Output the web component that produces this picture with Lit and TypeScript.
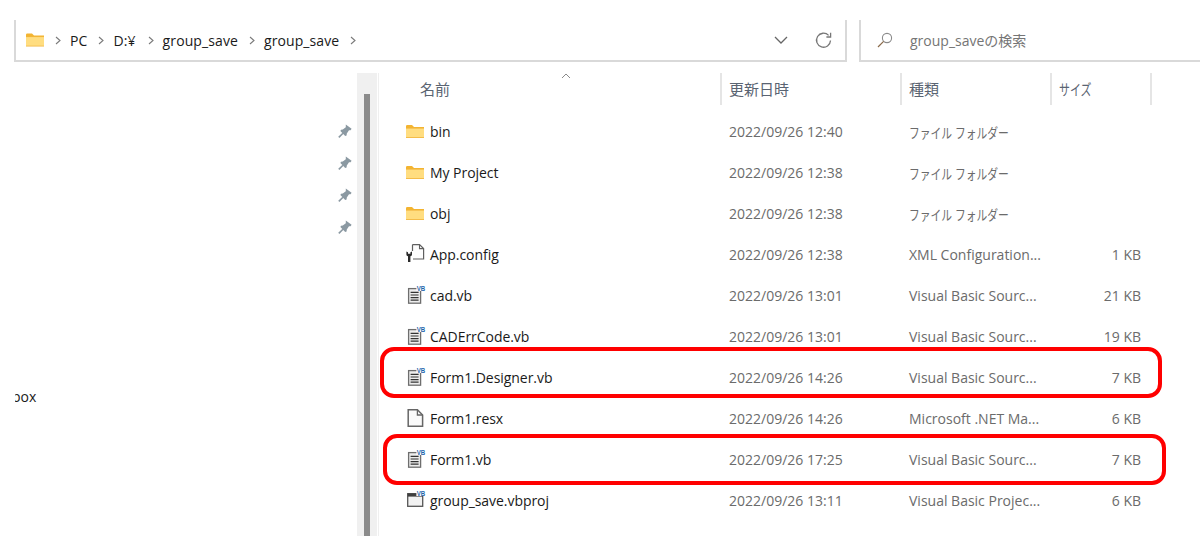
import { LitElement, html, css, svg } from "lit";
import { customElement } from "lit/decorators.js";

type Kind = "folder" | "config" | "vb" | "resx" | "proj";
interface Row { name: string; date: string; type: string; size: string; icon: Kind; kana?: boolean; }

const rows: Row[] = [
  { name: "bin", date: "2022/09/26 12:40", type: "ファイル フォルダー", size: "", icon: "folder", kana: true },
  { name: "My Project", date: "2022/09/26 12:38", type: "ファイル フォルダー", size: "", icon: "folder", kana: true },
  { name: "obj", date: "2022/09/26 12:38", type: "ファイル フォルダー", size: "", icon: "folder", kana: true },
  { name: "App.config", date: "2022/09/26 12:38", type: "XML Configuration...", size: "1 KB", icon: "config" },
  { name: "cad.vb", date: "2022/09/26 13:01", type: "Visual Basic Sourc...", size: "21 KB", icon: "vb" },
  { name: "CADErrCode.vb", date: "2022/09/26 13:01", type: "Visual Basic Sourc...", size: "19 KB", icon: "vb" },
  { name: "Form1.Designer.vb", date: "2022/09/26 14:26", type: "Visual Basic Sourc...", size: "7 KB", icon: "vb" },
  { name: "Form1.resx", date: "2022/09/26 14:26", type: "Microsoft .NET Ma...", size: "6 KB", icon: "resx" },
  { name: "Form1.vb", date: "2022/09/26 17:25", type: "Visual Basic Sourc...", size: "7 KB", icon: "vb" },
  { name: "group_save.vbproj", date: "2022/09/26 13:11", type: "Visual Basic Projec...", size: "6 KB", icon: "proj" },
];

const folderShape = svg`
  <path d="M0 1.2Q0 0 1.2 0H6L8 2H18V5H0Z" fill="#f3b431"/>
  <rect x="0" y="3" width="18" height="10" fill="#f2b53c"/>
  <rect x="0" y="3.6" width="18" height="8.6" fill="#ffdd80"/>`;

const addrFolder = html`<svg width="18" height="14" viewBox="0 0 18 13">${folderShape}</svg>`;

const badge = svg`<text x="10.8" y="5.6" font-family="Liberation Sans" font-size="6.8" font-weight="700" fill="#1f66ab" textLength="8.4" lengthAdjust="spacingAndGlyphs">VB</text>`;

const box = (inner: unknown) => html`<svg width="20" height="22" viewBox="0 0 20 22">${inner}</svg>`;

const icons: Record<Kind, unknown> = {
  folder: box(svg`<g transform="translate(0 4)">${folderShape}</g>`),
  config: box(svg`
    <path d="M6.5 0.6H13.5L17.6 4.6V15H7" fill="#fdfdfd" stroke="#5f5f5f" stroke-width="1.2"/>
    <path d="M13.5 0.6V4.6H17.6" fill="none" stroke="#5f5f5f" stroke-width="1.1"/>
    <path d="M6.5 0.6V7" stroke="#5f5f5f" stroke-width="1.2"/>
    <path d="M0.4 7.5V10.4Q0.4 11.8 2 12.2V18H4.4V12.2Q6 11.8 6 10.4V7.5L4.4 8.3V9.8H2V8.3Z" fill="#2b2b2b"/>`),
  vb: box(svg`
    <rect x="2.6" y="3.6" width="12" height="14.6" fill="#ededed" stroke="#6e6e6e" stroke-width="1.3"/>
    <path d="M4.6 7.4H12.6M4.6 10H12.6M4.6 12.6H12.6M4.6 15.2H12.6" stroke="#333" stroke-width="1.2"/>
    <rect x="10.4" y="0.6" width="9" height="5.4" fill="#fff"/>
    ${badge}`),
  resx: box(svg`
    <path d="M2.2 1.8H11.4L16.6 7V18.2H2.2Z" fill="#fafafa" stroke="#666" stroke-width="1.5"/>
    <path d="M11.4 1.8V7H16.6" fill="none" stroke="#666" stroke-width="1.3"/>`),
  proj: box(svg`
    <rect x="1.7" y="3.7" width="15" height="12.6" fill="#f2f2f2" stroke="#555" stroke-width="1.3"/>
    <rect x="1.7" y="3.4" width="15" height="3.2" fill="#3f3f3f"/>
    <rect x="10.4" y="0.6" width="9" height="5.4" fill="#fff"/>
    ${badge}`),
};

const pin = html`<svg width="14" height="14" viewBox="0 0 14 14">
  <path d="M7.8 0.4L13.6 4.8L12.6 6.2L11 6.2L8.8 9.6L8.6 11.4L7.2 12L2.4 7L3 5.8L4.8 5.6L7.8 3.2Z" fill="#8b99a2"/>
  <path d="M5 9.2L0.8 13.4" stroke="#8b99a2" stroke-width="1.6"/>
</svg>`;

const chev = html`<svg width="6" height="9" viewBox="0 0 6 9"><path d="M1 1L5 4.5L1 8" fill="none" stroke="#7a7a7a" stroke-width="1.1"/></svg>`;

@customElement("app-root")
export class AppRoot extends LitElement {
  static styles = css`
    :host {
      display: block;
      position: relative;
      width: 1200px;
      height: 543px;
      overflow: hidden;
      background: #fff;
      font-family: "Open Sans", "Noto Sans CJK JP", sans-serif;
      font-size: 14px;
      color: #1a1a1a;
    }
    .top { display: flex; gap: 12px; padding: 20px 0 0 14px; height: 73px; box-sizing: border-box; }
    .address, .search {
      height: 42px; box-sizing: border-box; background: #fff;
      border-left: 2px solid #d9d9d9; border-bottom: 2px solid #d9d9d9;
      display: flex; align-items: center;
    }
    .address { width: 833px; border-right: 2px solid #d9d9d9; padding-left: 10px; }
    .search { flex: 1; padding-left: 16px; color: #757575; }
    .crumbs { display: flex; align-items: center; flex: 1; }
    .crumbs .f { display: flex; margin-right: 11px; }
    .crumb { margin: 0 11px 0 9px; letter-spacing: 0.1px; }
    .crumb.d { margin-right: 12px; }
    .addr-tools { display: flex; align-items: center; gap: 27px; padding-right: 13px; }
    .search svg { margin-right: 17px; }
    .main { display: flex; height: 463px; }
    .nav {
      width: 357px; flex: none; box-sizing: border-box;
      display: flex; flex-direction: column; align-items: flex-end;
      padding: 51px 4px 0 0;
    }
    .pins { display: flex; flex-direction: column; gap: 18px; margin-right: 1px; }
    .pins svg { display: block; }
    .clip {
      align-self: flex-start; margin: 153px 0 0 15px; width: 24px; overflow: hidden;
      white-space: nowrap; line-height: 20px;
    }
    .clip span { display: block; margin-left: -3px; }
    .track { width: 20px; flex: none; background: #f0f0f0; padding: 21px 0 0 7px; box-sizing: border-box; }
    .thumb { width: 6px; height: 100%; background: #8b8b8b; }
    .list { flex: 1; margin-left: 1px; border-left: 1px solid #efefef; }
    .head, .row { display: grid; grid-template-columns: 343px 180px 150px 100px 1fr; }
    .head { height: 32px; position: relative; color: #5a6472; font-size: 15px; }
    .head .c {
      display: flex; align-items: center; border-right: 2px solid #e5e5e5;
      box-sizing: border-box; padding: 0 0 2px 7px;
    }
    .head .c:first-child { padding-left: 41px; }
    .head .c.end { border-right: 0; }
    .narrow { display: inline-block; transform: scaleX(0.73); transform-origin: left center; white-space: nowrap; }
    .sort { position: absolute; left: 182px; top: 0; }
    .rows { padding-top: 6px; }
    .row { height: 41px; align-items: center; }
    .name { display: flex; align-items: center; padding-left: 27px; letter-spacing: -0.05px; }
    .ic { width: 24px; height: 22px; display: flex; flex: none; }
    .ic svg { display: block; }
    .muted { color: #6b6b6b; padding-left: 7px; white-space: nowrap; }
    .kana { display: inline-block; transform: scaleX(0.77); transform-origin: left center; }
    .size { color: #6b6b6b; text-align: right; padding-right: 11px; }
    .mark {
      position: absolute; box-sizing: border-box; border: 4px solid #ff0000;
      border-radius: 14px; pointer-events: none;
    }
    .m1 { left: 380px; top: 347px; width: 782px; height: 51px; }
    .m2 { left: 383px; top: 434px; width: 783px; height: 51px; }
  `;

  render() {
    return html`
      <div class="top">
        <div class="address">
          <div class="crumbs">
            <span class="f">${addrFolder}</span>
            ${chev}<span class="crumb">PC</span>
            ${chev}<span class="crumb d">D:¥</span>
            ${chev}<span class="crumb">group_save</span>
            ${chev}<span class="crumb">group_save</span>
            ${chev}
          </div>
          <div class="addr-tools">
            <svg width="14" height="8" viewBox="0 0 14 8"><path d="M1 1L7 7L13 1" fill="none" stroke="#666" stroke-width="1.3"/></svg>
            <svg width="17" height="17" viewBox="0 0 17 17"><path d="M13.6 3.4A7 7 0 1 0 15.5 8.5" fill="none" stroke="#777" stroke-width="1.3"/><path d="M15.6 0.8V5H11.4" fill="none" stroke="#777" stroke-width="1.3"/></svg>
          </div>
        </div>
        <div class="search">
          <svg width="16" height="16" viewBox="0 0 16 16"><circle cx="10" cy="6" r="4.6" fill="none" stroke="#8a8a8a" stroke-width="1.1"/><path d="M6.6 9.4L1 15" stroke="#8a6a4a" stroke-width="1.2"/></svg>
          <span>group_saveの検索</span>
        </div>
      </div>
      <div class="main">
        <div class="nav">
          <div class="pins">${[0, 1, 2, 3].map(() => pin)}</div>
          <div class="clip"><span>box</span></div>
        </div>
        <div class="track"><div class="thumb"></div></div>
        <div class="list">
          <div class="head">
            <div class="c">名前</div>
            <div class="c">更新日時</div>
            <div class="c">種類</div>
            <div class="c"><span class="narrow">サイズ</span></div>
            <div class="c end"></div>
            <svg class="sort" width="10" height="6" viewBox="0 0 10 6"><path d="M1 5L5 1L9 5" fill="none" stroke="#8a8a8a" stroke-width="1"/></svg>
          </div>
          <div class="rows">
            ${rows.map((r) => html`
              <div class="row">
                <div class="name"><span class="ic">${icons[r.icon]}</span><span>${r.name}</span></div>
                <div class="muted">${r.date}</div>
                <div class="muted"><span class=${r.kana ? "kana" : ""}>${r.type}</span></div>
                <div class="size">${r.size}</div>
                <div></div>
              </div>`)}
          </div>
        </div>
      </div>
      <div class="mark m1"></div>
      <div class="mark m2"></div>
    `;
  }
}
